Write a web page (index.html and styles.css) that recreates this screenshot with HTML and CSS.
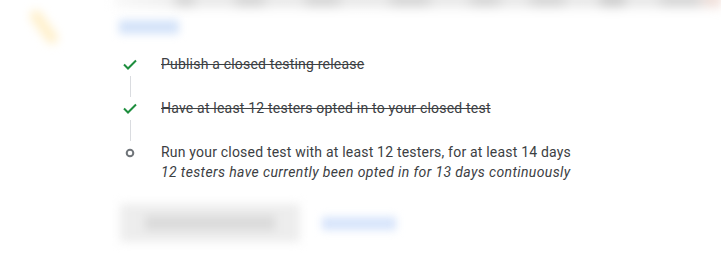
FILE: index.html
```html
<!DOCTYPE html>
<html>
<head>
<meta charset="utf-8">
<link rel="stylesheet" href="styles.css">
</head>
<body>
<div class="page">
  <div class="header">
    <div class="art">
      <svg width="70" height="54" viewBox="0 0 70 54"><line x1="36" y1="16" x2="52" y2="38" stroke="#fff0cc" stroke-width="12" stroke-linecap="round"/></svg>
    </div>
    <div class="head-main">
      <div class="title-blur">
        <span class="w w1"></span><span class="w w2"></span><span class="w w3"></span><span class="w w4"></span><span class="w w5"></span><span class="w w6"></span><span class="w w7"></span><span class="w w8"></span><span class="w w9"></span>
      </div>
      <div class="link-blur"></div>
    </div>
  </div>

  <ul class="steps">
    <li class="step done">
      <div class="rail">
        <svg class="ico" width="16" height="20" viewBox="0 0 16 20"><path d="M2 10.5 L6 14.5 L14 6.5" fill="none" stroke="#1e8e3e" stroke-width="2"/></svg>
        <div class="line"></div>
      </div>
      <div class="txt"><span class="strike">Publish a closed testing release</span></div>
    </li>
    <li class="step done">
      <div class="rail">
        <svg class="ico" width="16" height="20" viewBox="0 0 16 20"><path d="M2 10.5 L6 14.5 L14 6.5" fill="none" stroke="#1e8e3e" stroke-width="2"/></svg>
        <div class="line"></div>
      </div>
      <div class="txt"><span class="strike">Have at least 12 testers opted in to your closed test</span></div>
    </li>
    <li class="step last">
      <div class="rail">
        <svg class="ico" width="16" height="20" viewBox="0 0 16 20"><circle cx="8" cy="11" r="3.3" fill="none" stroke="#70757a" stroke-width="2"/></svg>
      </div>
      <div class="txt">
        <div>Run your closed test with at least 12 testers, for at least 14 days</div>
        <div class="sub">12 testers have currently been opted in for 13 days continuously</div>
      </div>
    </li>
  </ul>

  <div class="actions">
    <div class="btn-blur"><div class="btn-inner"></div></div>
    <div class="learn-blur"></div>
  </div>
</div>
</body>
</html>
```
FILE: styles.css
```css
html, body {
  margin: 0;
  padding: 0;
  background: #ffffff;
  overflow: hidden;
}
.page {
  width: 721px;
  height: 269px;
  font-family: Roboto, "Liberation Sans", sans-serif;
  color: #3c4043;
  font-size: 14px;
}
.header {
  display: flex;
  height: 54px;
}
.art {
  flex: none;
  width: 115px;
  filter: blur(5px);
}
.head-main {
  flex: 1;
  min-width: 0;
  display: flex;
  flex-direction: column;
}
.title-blur {
  height: 12px;
  margin-top: -6px;
  display: flex;
  overflow: hidden;
  background: linear-gradient(90deg, #f6f6f6, #e4e4e4 15%, #e2e2e2 95%, #efd2c8);
  filter: blur(6px);
}
.w {
  flex: none;
  height: 12px;
  background: #cdcdcd;
}
.w1 { width: 20px; margin-left: 60px; }
.w2 { width: 30px; margin-left: 40px; }
.w3 { width: 35px; margin-left: 40px; }
.w4 { width: 40px; margin-left: 50px; }
.w5 { width: 30px; margin-left: 40px; }
.w6 { width: 35px; margin-left: 30px; }
.w7 { width: 25px; margin-left: 35px; background: #c2c2c2; }
.w8 { width: 40px; margin-left: 35px; }
.w9 { width: 30px; margin-left: 30px; }
.link-blur {
  width: 60px;
  height: 14px;
  margin-top: 14px;
  margin-left: 4px;
  background: #d4e3f9;
  filter: blur(4px);
  align-self: flex-start;
}
.steps {
  list-style: none;
  margin: 0;
  padding: 0 0 0 122px;
}
.step {
  display: flex;
  min-height: 44px;
}
.step.last {
  min-height: 40px;
}
.rail {
  width: 16px;
  display: flex;
  flex-direction: column;
  align-items: center;
  margin-right: 23px;
}
.ico {
  display: block;
  flex: none;
}
.line {
  flex: 1;
  width: 1px;
  background: #dadce0;
  margin: 2px 0 1px;
}
.txt {
  line-height: 20px;
  letter-spacing: 0.2px;
}
.strike {
  text-decoration: line-through;
  text-decoration-thickness: 1px;
}
.sub {
  font-style: italic;
  letter-spacing: 0.38px;
}
.actions {
  display: flex;
  align-items: center;
  padding-left: 120px;
  margin-top: 22px;
}
.btn-blur {
  width: 180px;
  height: 38px;
  background: #ededed;
  filter: blur(5px);
  display: flex;
  align-items: center;
  justify-content: center;
}
.btn-inner {
  width: 130px;
  height: 14px;
  background: #dadada;
}
.learn-blur {
  width: 74px;
  height: 13px;
  margin-left: 22px;
  background: #d6e4fb;
  filter: blur(4px);
}
```
